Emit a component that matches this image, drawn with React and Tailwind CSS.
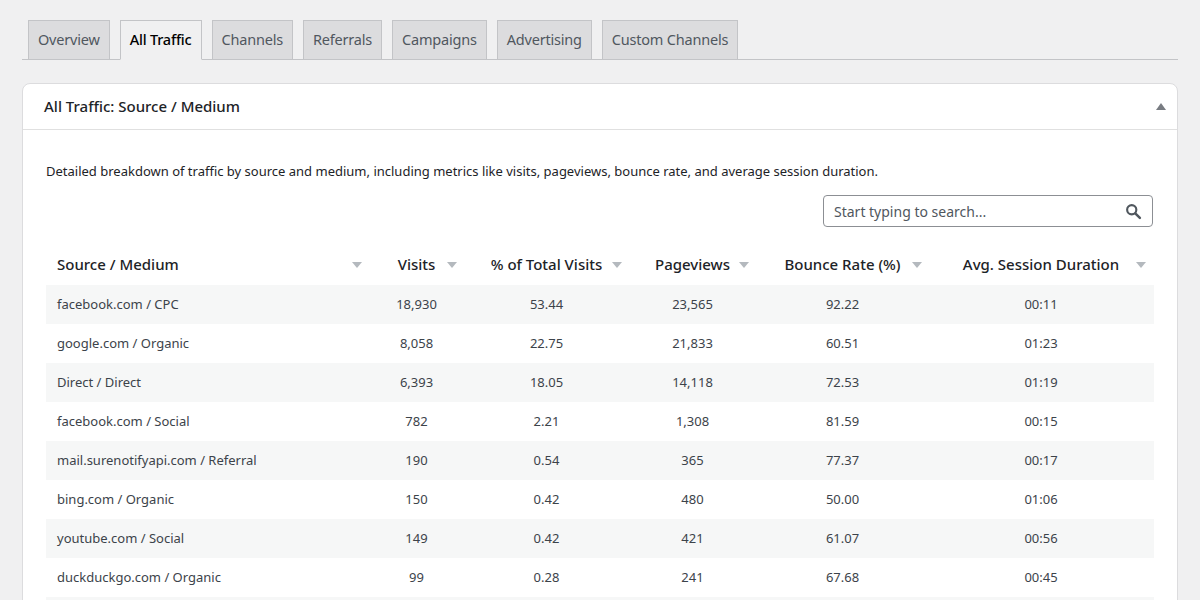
const rows=[["facebook.com / CPC","18,930","53.44","23,565","92.22","00:11"],["google.com / Organic","8,058","22.75","21,833","60.51","01:23"],["Direct / Direct","6,393","18.05","14,118","72.53","01:19"],["facebook.com / Social","782","2.21","1,308","81.59","00:15"],["mail.surenotifyapi.com / Referral","190","0.54","365","77.37","00:17"],["bing.com / Organic","150","0.42","480","50.00","01:06"],["youtube.com / Social","149","0.42","421","61.07","00:56"],["duckduckgo.com / Organic","99","0.28","241","67.68","00:45"],["","","","","",""]];
const tabs=["Overview","All Traffic","Channels","Referrals","Campaigns","Advertising","Custom Channels"];
const widths=["w-[324px]","w-[95px]","w-[165px]","w-[127px]","w-[173px]","w-[224px]"];
const heads=["Source / Medium","Visits","% of Total Visits","Pageviews","Bounce Rate (%)","Avg. Session Duration"];
function Arrow(){return <span className="absolute right-[8px] top-[18px] w-0 h-0 border-l-[5px] border-r-[5px] border-t-[6px] border-l-transparent border-r-transparent border-t-[#b4b9be]"/>}
export default function App(){return(
<div className="w-[1200px] h-[600px] overflow-hidden bg-[#f0f0f1] text-[#1d2327]" style={{fontFamily:'"Noto Sans","Open Sans",sans-serif'}}>
<div className="pt-[20px] px-[22px]">
<div className="flex gap-[10px] pl-[6px] border-b border-[#c3c4c7] h-[40px]">
{tabs.map((t,i)=><div key={t} className={"h-[40px] px-[9px] flex items-center text-[14.5px] tracking-[-0.2px] border border-[#c3c4c7] "+(i===1?"bg-[#f0f0f1] border-b-[#f0f0f1] text-black font-medium":"bg-[#dcdcde] text-[#50575e] h-[39px]")}>{t}</div>)}
</div>
<div className="mt-[23px] bg-white border border-[#dcdcde] rounded-t-[8px] h-[600px]">
<div className="h-[46px] flex items-center justify-between px-[21px] border-b border-[#e0e0e0]">
<span className="text-[15px] font-medium">All Traffic: Source / Medium</span>
<span className="w-0 h-0 border-l-[5px] border-r-[5px] border-b-[7px] border-l-transparent border-r-transparent border-b-[#787c82] mr-[-10px]"/>
</div>
<div className="px-[23px]">
<p className="text-[13px] mt-[31px] leading-[20px]">Detailed breakdown of traffic by source and medium, including metrics like visits, pageviews, bounce rate, and average session duration.</p>
<div className="flex justify-end mt-[14px] pr-[1px]">
<div className="w-[330px] h-[32px] border border-[#8c8f94] rounded-[4px] flex items-center justify-between px-[10px]">
<span className="text-[14px] text-[#50575e]">Start typing to search...</span>
<svg width="17" height="17" viewBox="0 0 24 24"><circle cx="9.5" cy="9.5" r="6.5" fill="none" stroke="#50575e" strokeWidth="3"/><path d="M14.5 14.5L21 21" stroke="#50575e" strokeWidth="3.5" strokeLinecap="round"/></svg>
</div></div>
<div className="mt-[17px] w-[1108px]">
<div className="flex h-[41px] text-[15px] font-medium">
{heads.map((h,i)=><div key={h} className={"relative flex items-center "+widths[i]+(i===0?" pl-[11px]":" justify-center pr-[2px]")}>{h}<Arrow/></div>)}
</div>
{rows.map((r,j)=><div key={j} className={"flex h-[39px] items-center text-[13px] text-[#3c434a] "+(j%2===0?"bg-[#f6f7f7]":"")}>
{r.map((c,i)=><div key={i} className={widths[i]+(i===0?" pl-[11px]":" text-center pr-[2px]")}>{c}</div>)}
</div>)}
</div></div></div></div></div>)}
